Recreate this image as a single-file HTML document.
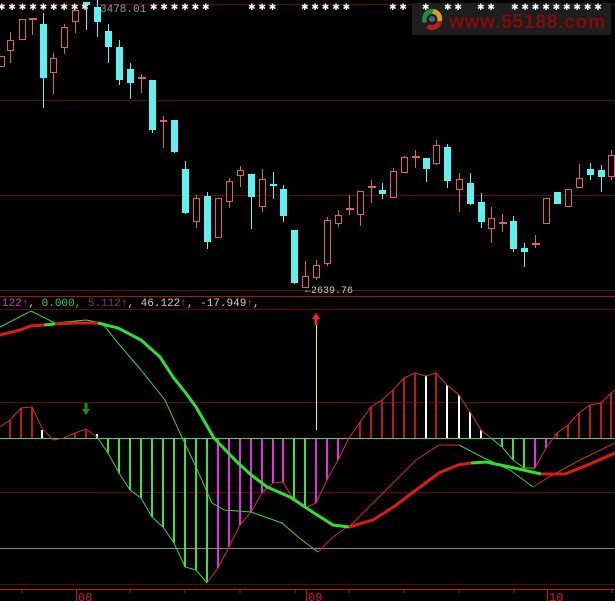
<!DOCTYPE html>
<html><head><meta charset="utf-8"><style>
html,body{margin:0;padding:0;background:#000;overflow:hidden}
svg{display:block}
</style></head><body>
<svg width="615" height="601" viewBox="0 0 615 601" xmlns="http://www.w3.org/2000/svg" font-family="Liberation Mono, monospace">
<rect width="615" height="601" fill="#000"/>
<g stroke="#5a0a0a" stroke-width="1">
<line x1="0" y1="4.5" x2="615" y2="4.5"/>
<line x1="0" y1="100.5" x2="615" y2="100.5"/>
<line x1="0" y1="195.5" x2="615" y2="195.5"/>
<line x1="0" y1="290.5" x2="615" y2="290.5"/>
<line x1="0" y1="309.5" x2="615" y2="309.5"/>
<line x1="0" y1="402.5" x2="615" y2="402.5"/>
<line x1="0" y1="492.5" x2="615" y2="492.5"/>
<line x1="0" y1="584.5" x2="615" y2="584.5"/>
</g>
<line x1="0" y1="296.5" x2="615" y2="296.5" stroke="#b01010"/>
<line x1="0" y1="589.5" x2="615" y2="589.5" stroke="#c01818"/>
<line x1="0" y1="548.5" x2="615" y2="548.5" stroke="#888"/>
<rect x="412" y="3" width="199" height="32" fill="#1e1e1e"/>
<g transform="translate(432,19)">
<path d="M-9,4 A10,10 0 0 1 2,-10 L2,-5 A6,6 0 0 0 -5,3 Z" fill="#2a8a3a"/>
<path d="M2,-10 A10,10 0 0 1 10,2 L5,2 A5,5 0 0 0 0,-5 Z" fill="#d8a020"/>
<path d="M10,2 A10,10 0 0 1 -6,9 L-3,5 A5,5 0 0 0 5,2 Z" fill="#b02020"/>
<circle r="3" fill="#4060a0"/>
</g>
<text x="449" y="28" font-family="Liberation Sans, sans-serif" font-weight="bold" font-size="19" fill="#800c0c" textLength="156">www.55188.com</text>
<g fill="#fff" font-size="9" font-family="DejaVu Sans, sans-serif">
<text x="-2" y="10">✱ ✱ ✱ ✱ ✱ ✱ ✱ ✱ ✱</text>
<text x="150" y="10">✱ ✱ ✱ ✱ ✱ ✱</text>
<text x="248" y="10">✱ ✱ ✱</text>
<text x="301" y="10">✱ ✱ ✱ ✱ ✱</text>
<text x="389" y="10">✱ ✱</text>
<text x="422" y="10">✱</text>
<text x="444" y="10">✱ ✱</text>
<text x="477" y="10">✱ ✱</text>
<text x="511" y="10">✱ ✱ ✱ ✱ ✱ ✱ ✱ ✱ ✱</text>
</g>
<text x="100" y="12" font-size="11" fill="#999">3478.01</text>
<g stroke-width="1">
<g stroke="#e06060">
<line x1="10.5" y1="32" x2="10.5" y2="63"/><line x1="32.5" y1="18" x2="32.5" y2="35"/><line x1="53.5" y1="53" x2="53.5" y2="94"/><line x1="64.5" y1="24" x2="64.5" y2="54"/><line x1="75.5" y1="8" x2="75.5" y2="33"/><line x1="141.5" y1="74" x2="141.5" y2="93"/><line x1="163.5" y1="116" x2="163.5" y2="148"/><line x1="196.5" y1="195" x2="196.5" y2="228"/><line x1="229.5" y1="178" x2="229.5" y2="208"/><line x1="240.5" y1="166" x2="240.5" y2="187"/><line x1="262.5" y1="169" x2="262.5" y2="212"/><line x1="305.5" y1="261" x2="305.5" y2="288"/><line x1="316.5" y1="260" x2="316.5" y2="280"/><line x1="327.5" y1="217" x2="327.5" y2="266"/><line x1="338.5" y1="210" x2="338.5" y2="227"/><line x1="349.5" y1="195" x2="349.5" y2="215"/><line x1="360.5" y1="191" x2="360.5" y2="226"/><line x1="371.5" y1="180" x2="371.5" y2="203"/><line x1="393.5" y1="168" x2="393.5" y2="197"/><line x1="404.5" y1="156" x2="404.5" y2="173"/><line x1="415.5" y1="150" x2="415.5" y2="168"/><line x1="436.5" y1="140" x2="436.5" y2="165"/><line x1="459.5" y1="173" x2="459.5" y2="212"/><line x1="491.5" y1="207" x2="491.5" y2="243"/><line x1="502.5" y1="214" x2="502.5" y2="232"/><line x1="535.5" y1="235" x2="535.5" y2="248"/><line x1="579.5" y1="164" x2="579.5" y2="187"/><line x1="611.5" y1="150" x2="611.5" y2="180"/>
</g>
<g stroke="#60f0f0">
<line x1="43.5" y1="13" x2="43.5" y2="108"/><line x1="86.5" y1="2" x2="86.5" y2="30"/><line x1="97.5" y1="0" x2="97.5" y2="37"/><line x1="108.5" y1="24" x2="108.5" y2="63"/><line x1="119.5" y1="40" x2="119.5" y2="85"/><line x1="130.5" y1="63" x2="130.5" y2="99"/><line x1="152.5" y1="80" x2="152.5" y2="133"/><line x1="174.5" y1="120" x2="174.5" y2="153"/><line x1="185.5" y1="161" x2="185.5" y2="214"/><line x1="207.5" y1="192" x2="207.5" y2="249"/><line x1="251.5" y1="174" x2="251.5" y2="229"/><line x1="273.5" y1="172" x2="273.5" y2="199"/><line x1="283.5" y1="185" x2="283.5" y2="222"/><line x1="294.5" y1="230" x2="294.5" y2="284"/><line x1="382.5" y1="183" x2="382.5" y2="199"/><line x1="426.5" y1="158" x2="426.5" y2="182"/><line x1="447.5" y1="144" x2="447.5" y2="188"/><line x1="470.5" y1="173" x2="470.5" y2="205"/><line x1="481.5" y1="193" x2="481.5" y2="228"/><line x1="513.5" y1="216" x2="513.5" y2="252"/><line x1="524.5" y1="243" x2="524.5" y2="267"/><line x1="590.5" y1="163" x2="590.5" y2="180"/><line x1="601.5" y1="165" x2="601.5" y2="192"/>
</g>
</g>
<g fill="#000" stroke="#e06060">
<rect x="-1.5" y="56.5" width="6" height="10"/><rect x="7.5" y="40.5" width="6" height="10"/><rect x="19.5" y="19.5" width="6" height="20"/><rect x="50.5" y="58.5" width="6" height="14"/><rect x="61.5" y="27.5" width="6" height="20"/><rect x="72.5" y="10.5" width="6" height="11"/><rect x="193.5" y="198.5" width="6" height="23"/><rect x="215.5" y="198.5" width="6" height="39"/><rect x="226.5" y="181.5" width="6" height="20"/><rect x="237.5" y="170.5" width="6" height="5"/><rect x="259.5" y="179.5" width="6" height="27"/><rect x="302.5" y="276.5" width="6" height="11"/><rect x="313.5" y="265.5" width="6" height="12"/><rect x="324.5" y="220.5" width="6" height="43"/><rect x="335.5" y="215.5" width="6" height="8"/><rect x="357.5" y="191.5" width="6" height="23"/><rect x="390.5" y="171.5" width="6" height="26"/><rect x="401.5" y="157.5" width="6" height="15"/><rect x="433.5" y="145.5" width="6" height="18"/><rect x="456.5" y="179.5" width="6" height="10"/><rect x="488.5" y="218.5" width="6" height="10"/><rect x="543.5" y="198.5" width="6" height="25"/><rect x="565.5" y="189.5" width="6" height="17"/><rect x="576.5" y="178.5" width="6" height="9"/><rect x="608.5" y="155.5" width="6" height="21"/>
</g>
<g fill="#e06060">
<rect x="29" y="18" width="8" height="2"/><rect x="138" y="77" width="8" height="2"/><rect x="160" y="120" width="7" height="2"/><rect x="346" y="208" width="8" height="2"/><rect x="368" y="186" width="8" height="2"/><rect x="412" y="156" width="8" height="2"/><rect x="499" y="222" width="8" height="2"/><rect x="532" y="243" width="8" height="2"/>
</g>
<g fill="#60f0f0">
<rect x="40" y="24" width="7" height="54"/><rect x="83" y="2" width="7" height="3"/><rect x="94" y="7" width="7" height="15"/><rect x="105" y="31" width="7" height="16"/><rect x="116" y="47" width="7" height="33"/><rect x="127" y="69" width="7" height="14"/><rect x="149" y="80" width="7" height="50"/><rect x="171" y="120" width="7" height="32"/><rect x="182" y="169" width="7" height="44"/><rect x="204" y="196" width="7" height="46"/><rect x="248" y="174" width="7" height="23"/><rect x="270" y="184" width="7" height="2"/><rect x="280" y="189" width="7" height="27"/><rect x="291" y="230" width="7" height="53"/><rect x="379" y="190" width="7" height="4"/><rect x="423" y="158" width="7" height="11"/><rect x="444" y="147" width="7" height="34"/><rect x="467" y="183" width="7" height="21"/><rect x="478" y="202" width="7" height="20"/><rect x="510" y="221" width="7" height="28"/><rect x="521" y="248" width="7" height="4"/><rect x="554" y="192" width="7" height="12"/><rect x="587" y="169" width="7" height="6"/><rect x="598" y="170" width="7" height="7"/>
</g>
<text x="305" y="293" font-size="10" fill="#ccc">←2639.76</text>
<text y="306" font-size="11"><tspan x="2" fill="#c040c0">122</tspan><tspan fill="#e03030">↑</tspan><tspan fill="#ccc">, </tspan><tspan fill="#40d040">0.000, </tspan><tspan fill="#7a3a7a">5.112</tspan><tspan fill="#e03030">↑</tspan><tspan fill="#ccc">, 46.122</tspan><tspan fill="#e03030">↑</tspan><tspan fill="#ccc">, -17.949</tspan><tspan fill="#e03030">↑</tspan><tspan fill="#ccc">,</tspan></text>
<g stroke-width="2">
<g stroke="#c01818">
<line x1="10" y1="438" x2="10" y2="420"/><line x1="21" y1="438" x2="21" y2="408"/><line x1="32" y1="438" x2="32" y2="407"/><line x1="75" y1="438" x2="75" y2="433"/><line x1="86" y1="438" x2="86" y2="429"/><line x1="360" y1="438" x2="360" y2="422"/><line x1="371" y1="438" x2="371" y2="407"/><line x1="382" y1="438" x2="382" y2="400"/><line x1="393" y1="438" x2="393" y2="390"/><line x1="404" y1="438" x2="404" y2="378"/><line x1="415" y1="438" x2="415" y2="373"/><line x1="436" y1="438" x2="436" y2="373"/><line x1="557" y1="438" x2="557" y2="433"/><line x1="568" y1="438" x2="568" y2="425"/><line x1="579" y1="438" x2="579" y2="413"/><line x1="590" y1="438" x2="590" y2="405"/><line x1="601" y1="438" x2="601" y2="403"/><line x1="611" y1="438" x2="611" y2="393"/>
</g>
<g stroke="#fff">
<line x1="42" y1="438" x2="42" y2="430"/><line x1="97" y1="438" x2="97" y2="434"/><line x1="426" y1="438" x2="426" y2="376"/><line x1="447" y1="438" x2="447" y2="385"/><line x1="459" y1="438" x2="459" y2="395"/><line x1="470" y1="438" x2="470" y2="412"/><line x1="481" y1="438" x2="481" y2="430"/>
</g>
<g stroke="#40e040">
<line x1="108" y1="438" x2="108" y2="453"/><line x1="119" y1="438" x2="119" y2="473"/><line x1="130" y1="438" x2="130" y2="490"/><line x1="141" y1="438" x2="141" y2="498"/><line x1="152" y1="438" x2="152" y2="517"/><line x1="163" y1="438" x2="163" y2="527"/><line x1="174" y1="438" x2="174" y2="543"/><line x1="185" y1="438" x2="185" y2="567"/><line x1="196" y1="438" x2="196" y2="570"/><line x1="207" y1="438" x2="207" y2="583"/><line x1="294" y1="438" x2="294" y2="500"/><line x1="305" y1="438" x2="305" y2="508"/><line x1="502" y1="438" x2="502" y2="447"/><line x1="513" y1="438" x2="513" y2="460"/><line x1="524" y1="438" x2="524" y2="468"/>
</g>
<g stroke="#e030e0">
<line x1="218" y1="438" x2="218" y2="568"/><line x1="229" y1="438" x2="229" y2="547"/><line x1="240" y1="438" x2="240" y2="525"/><line x1="251" y1="438" x2="251" y2="512"/><line x1="262" y1="438" x2="262" y2="493"/><line x1="273" y1="438" x2="273" y2="483"/><line x1="283" y1="438" x2="283" y2="482"/><line x1="316" y1="438" x2="316" y2="503"/><line x1="327" y1="438" x2="327" y2="480"/><line x1="338" y1="438" x2="338" y2="460"/><line x1="535" y1="438" x2="535" y2="468"/><line x1="546" y1="438" x2="546" y2="448"/>
</g>
</g>
<line x1="0" y1="438.5" x2="615" y2="438.5" stroke="#50d050"/>
<polyline fill="none" stroke="#d03030" stroke-width="1" points="0,427 10,420 21,408 32,407 42,428 53,440 64,438 75,433 86,429 97,437"/>
<polyline fill="none" stroke="#40d040" stroke-width="1" points="97,437 108,453 119,473 130,490 141,498 152,517 163,527 174,543 185,567 196,570 207,583"/>
<polyline fill="none" stroke="#d03030" stroke-width="1" points="207,583 218,568 229,547 240,525 251,512 262,493 273,483 283,482 294,500 305,508 316,503 327,480 338,460 349,438 360,422 371,407 382,400 393,390 404,378 415,373 426,376 436,373 447,385 459,395 470,412 481,430 491,438"/>
<polyline fill="none" stroke="#40d040" stroke-width="1" points="491,438 502,447 513,460 524,468 535,468"/>
<polyline fill="none" stroke="#d03030" stroke-width="1" points="535,468 546,448 557,433 568,425 579,413 590,405 601,403 611,393 615,390"/>
<polyline fill="none" stroke="#40d040" stroke-width="1" points="0,327 31,311 55,323 86,320 102,323 118,343 141,370 165,400 180,433 196,467 212,503 224,510 251,512 282,523 298,537 318,552"/>
<polyline fill="none" stroke="#d03030" stroke-width="1" points="318,552 333,537 353,523 376,500 416,460 439,445 459,445"/>
<polyline fill="none" stroke="#40d040" stroke-width="1" points="459,445 482,457 510,470 533,487"/>
<polyline fill="none" stroke="#d03030" stroke-width="1" points="533,487 549,477 580,460 615,443"/>
<polyline fill="none" stroke="#e01818" stroke-width="3" points="0,335 20,330 31,326 44,325"/>
<polyline fill="none" stroke="#30e030" stroke-width="3" points="44,325 55,324"/>
<polyline fill="none" stroke="#e01818" stroke-width="3" points="55,324 75,323 98,323"/>
<polyline fill="none" stroke="#30e030" stroke-width="3" points="98,323 118,328 141,340 160,357 173,377 185,392 196,407 214,438 235,460 250,474 267,487 290,497 314,513 333,525 349,527"/>
<polyline fill="none" stroke="#e01818" stroke-width="3" points="349,527 373,520 395,506 412,493 439,473 458,465 471,463"/>
<polyline fill="none" stroke="#30e030" stroke-width="3" points="471,463 486,462 510,467 541,474"/>
<polyline fill="none" stroke="#e01818" stroke-width="3" points="541,474 565,474 590,464 615,453"/>
<line x1="316.5" y1="318" x2="316.5" y2="430" stroke="#ffee88"/>
<path d="M316,313 l-4,6 h2.5 v6 h3 v-6 h2.5 z" fill="#ff2020"/>
<path d="M86,415 l-4,-6 h2.5 v-6 h3 v6 h2.5 z" fill="#208a20"/>
<g stroke="#c01818">
<line x1="22" y1="589" x2="22" y2="593"/><line x1="76.5" y1="589" x2="76.5" y2="601"/><line x1="130" y1="589" x2="130" y2="593"/><line x1="185" y1="589" x2="185" y2="593"/><line x1="240" y1="589" x2="240" y2="593"/><line x1="295" y1="589" x2="295" y2="593"/><line x1="306.5" y1="589" x2="306.5" y2="601"/><line x1="349" y1="589" x2="349" y2="593"/><line x1="404" y1="589" x2="404" y2="593"/><line x1="459" y1="589" x2="459" y2="593"/><line x1="514" y1="589" x2="514" y2="593"/><line x1="547.5" y1="589" x2="547.5" y2="601"/><line x1="612" y1="589" x2="612" y2="593"/>
</g>
<g fill="#d02020" font-size="12"><text x="78" y="601">08</text><text x="308" y="601">09</text><text x="549" y="601">10</text></g>
</svg>
</body></html>
